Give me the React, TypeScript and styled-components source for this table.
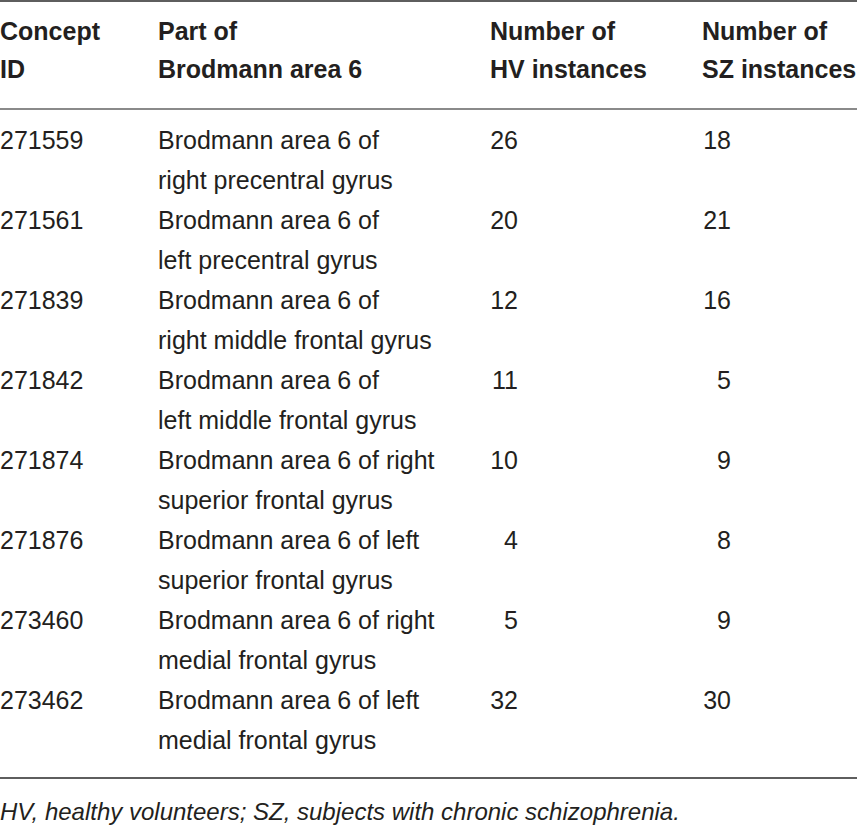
import React from "react";
import styled, { createGlobalStyle } from "styled-components";

const Global = createGlobalStyle`
  html, body { margin: 0; padding: 0; background: #ffffff; }
  body { font-family: "Liberation Sans", Arial, sans-serif; color: #231f20; }
`;

const Page = styled.div`
  width: 857px;
  background: #ffffff;
`;

const Table = styled.div`
  border-top: 2px solid #5e5e5e;
  border-bottom: 2px solid #5e5e5e;
`;

const Grid = styled.div`
  display: grid;
  grid-template-columns: 158px 332px 212px 1fr;
`;

const Head = styled(Grid)`
  padding: 10px 0 20px;
  border-bottom: 2px solid #8a8a8a;
`;

const HeadCell = styled.div`
  font-size: 25px;
  font-weight: 700;
  line-height: 38px;
  white-space: nowrap;
`;

const Body = styled.div`
  padding: 10px 0 17px;
`;

const Row = styled(Grid)`
  height: 80px;
`;

const Cell = styled.div`
  font-size: 25px;
  line-height: 40px;
  white-space: nowrap;
`;

const Num = styled.span<{ $offset: number }>`
  display: inline-block;
  width: 28px;
  margin-left: ${(p) => p.$offset}px;
  text-align: right;
  font-variant-numeric: tabular-nums;
`;

const Note = styled.p`
  margin: 0;
  padding-top: 18px;
  font-size: 24px;
  font-style: italic;
  line-height: 30px;
  white-space: nowrap;
`;

const rows: [string, string, string, string, string][] = [
  ["271559", "Brodmann area 6 of", "right precentral gyrus", "26", "18"],
  ["271561", "Brodmann area 6 of", "left precentral gyrus", "20", "21"],
  ["271839", "Brodmann area 6 of", "right middle frontal gyrus", "12", "16"],
  ["271842", "Brodmann area 6 of", "left middle frontal gyrus", "11", "5"],
  ["271874", "Brodmann area 6 of right", "superior frontal gyrus", "10", "9"],
  ["271876", "Brodmann area 6 of left", "superior frontal gyrus", "4", "8"],
  ["273460", "Brodmann area 6 of right", "medial frontal gyrus", "5", "9"],
  ["273462", "Brodmann area 6 of left", "medial frontal gyrus", "32", "30"],
];

export default function App() {
  return (
    <Page>
      <Global />
      <Table>
        <Head>
          <HeadCell>
            Concept
            <br />
            ID
          </HeadCell>
          <HeadCell>
            Part of
            <br />
            Brodmann area 6
          </HeadCell>
          <HeadCell>
            Number of
            <br />
            HV instances
          </HeadCell>
          <HeadCell>
            Number of
            <br />
            SZ instances
          </HeadCell>
        </Head>
        <Body>
          {rows.map(([id, a, b, hv, sz]) => (
            <Row key={id}>
              <Cell>{id}</Cell>
              <Cell>
                {a}
                <br />
                {b}
              </Cell>
              <Cell>
                <Num $offset={0}>{hv}</Num>
              </Cell>
              <Cell>
                <Num $offset={1}>{sz}</Num>
              </Cell>
            </Row>
          ))}
        </Body>
      </Table>
      <Note>HV, healthy volunteers; SZ, subjects with chronic schizophrenia.</Note>
    </Page>
  );
}
